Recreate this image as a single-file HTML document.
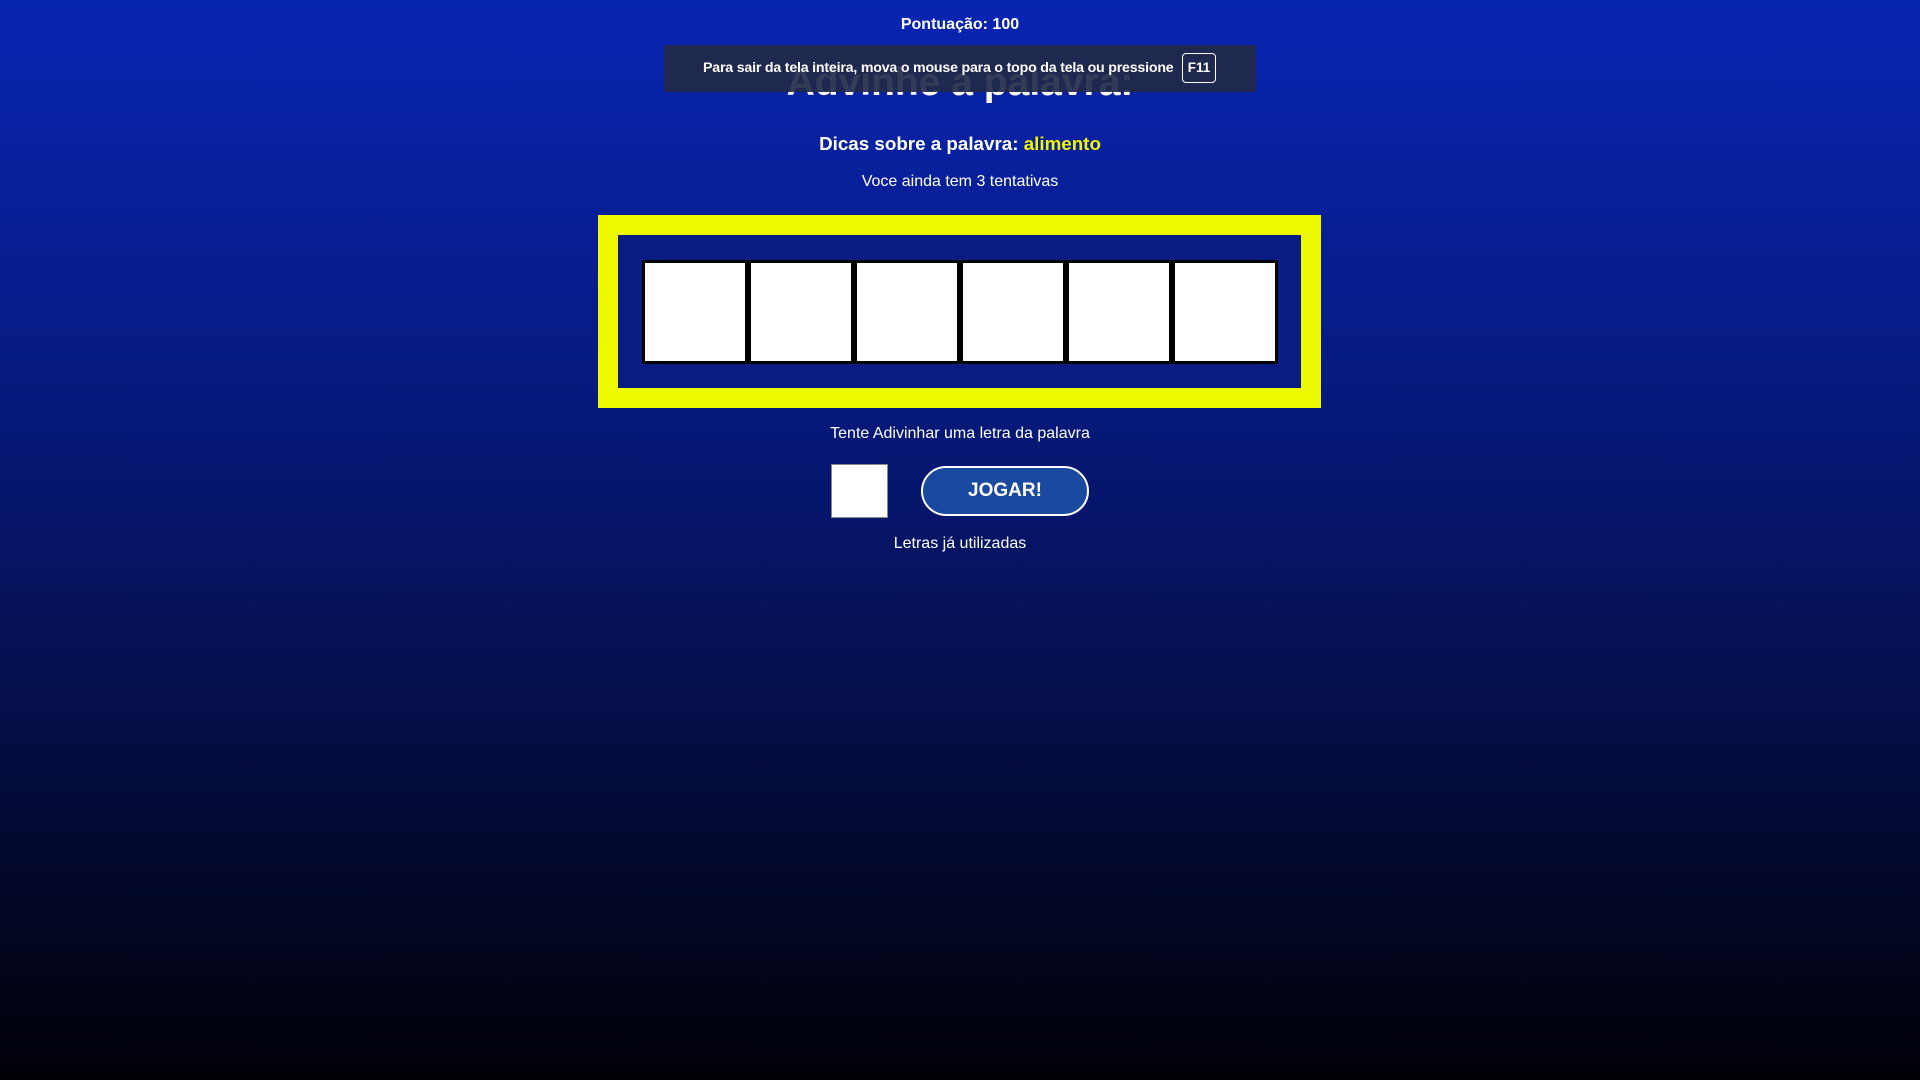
<!DOCTYPE html>
<html><head><meta charset="utf-8"><style>
html,body{margin:0;padding:0}
body{width:1920px;height:1080px;overflow:hidden;position:relative;background:linear-gradient(180deg,#0825b2 0%,#061a80 35%,#050f4a 65%,#000006 100%);font-family:"Liberation Sans",Arial,sans-serif;color:#fff}
.c{position:absolute;left:0;width:1920px;text-align:center;white-space:nowrap}
#toast{position:absolute;left:664px;top:45px;width:592px;height:47px;background:rgba(34,42,72,0.92);border-radius:3px}
#toast span{position:absolute;left:39px;top:15px;font-size:14.2px;font-weight:bold;letter-spacing:-0.2px}
#key{position:absolute;left:518px;top:8px;width:34px;height:30px;border:1.5px solid #fff;border-radius:4px;box-sizing:border-box;font-size:13.5px;font-weight:bold;text-align:center;line-height:28px}
#box{position:absolute;left:598px;top:215px;width:723px;height:193px;background:#eefa00}
#inner{position:absolute;left:20px;top:20px;width:683px;height:153px;background:#081c84}
.t{position:absolute;top:25px;width:106px;height:104px;background:#fff;border:3px solid #000;box-sizing:border-box}
#inp{position:absolute;left:831px;top:464px;width:57px;height:54px;background:#fff;border:1px solid #888;box-sizing:border-box}
#btn{position:absolute;left:921px;top:466px;width:168px;height:50px;background:#1a4aa0;border:2px solid #fff;border-radius:25px;box-sizing:border-box;font-weight:bold;font-size:19px;text-align:center;line-height:45px}
</style></head><body>
<div class="c" style="top:16px;font-size:16px;font-weight:bold">Pontuação: 100</div>
<div class="c" style="top:61px;font-size:39px;font-weight:bold">Advinhe a palavra:</div>
<div id="toast"><span>Para sair da tela inteira, mova o mouse para o topo da tela ou pressione</span><div id="key">F11</div></div>
<div class="c" style="top:133px;font-size:18.8px;font-weight:bold">Dicas sobre a palavra: <span style="color:#f2f500">alimento</span></div>
<div class="c" style="top:173px;font-size:16px">Voce ainda tem 3 tentativas</div>
<div id="box"><div id="inner">
<div class="t" style="left:24px"></div><div class="t" style="left:130px"></div><div class="t" style="left:236px"></div><div class="t" style="left:342px"></div><div class="t" style="left:448px"></div><div class="t" style="left:554px"></div>
</div></div>
<div class="c" style="top:425px;font-size:16px">Tente Adivinhar uma letra da palavra</div>
<div id="inp"></div>
<div id="btn">JOGAR!</div>
<div class="c" style="top:535px;font-size:16px">Letras já utilizadas</div>
</body></html>
